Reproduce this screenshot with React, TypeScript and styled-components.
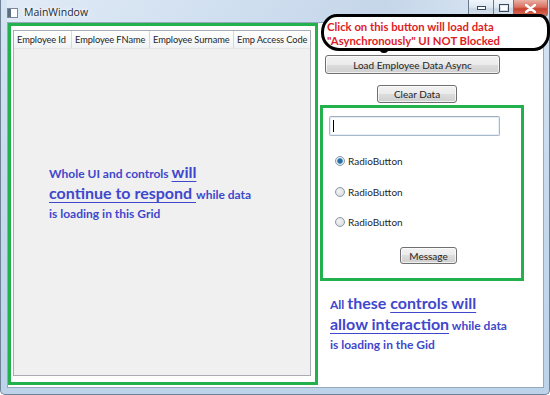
import React from "react";
import styled, { createGlobalStyle } from "styled-components";

const GlobalStyle = createGlobalStyle`
  html, body {
    margin: 0;
    padding: 0;
  }
  body {
    width: 550px;
    height: 395px;
    overflow: hidden;
    font-family: Lato, "Liberation Sans", sans-serif;
  }
`;

const Window = styled.div`
  position: relative;
  box-sizing: border-box;
  width: 550px;
  height: 395px;
  display: flex;
  flex-direction: column;
  padding: 0 5px 6px 6px;
  background: linear-gradient(to bottom, #d6e4f3 0%, #c7daee 45%, #bdd3ea 100%);
  border: 1px solid #6f8296;
  border-top: none;
  border-radius: 0 0 5px 5px;
`;

const TitleBar = styled.div`
  height: 22px;
  display: flex;
  align-items: flex-start;
  background: linear-gradient(
    to right,
    rgba(255, 255, 255, 0.25) 0%,
    rgba(180, 200, 225, 0.2) 45%,
    rgba(150, 175, 205, 0.25) 70%,
    rgba(255, 255, 255, 0.2) 100%
  );
`;

const AppIcon = styled.div`
  width: 9px;
  height: 8px;
  margin: 8px 0 0 0;
  border: 1px solid #7a8899;
  background: linear-gradient(to right, #5d6d80 0 3px, #ffffff 3px);
`;

const Title = styled.span`
  margin: 5px 0 0 6px;
  font-family: "Open Sans", sans-serif;
  font-size: 10.5px;
  color: #1e2935;
  text-shadow: 0 0 6px #ffffff, 0 0 3px #ffffff;
`;

const Controls = styled.div`
  margin-left: auto;
  margin-right: -4px;
  display: flex;
`;

const CaptionButton = styled.div<{ $close?: boolean; $w: number }>`
  width: ${(p) => p.$w}px;
  height: 17px;
  box-sizing: border-box;
  border: 1px solid #6a7a8e;
  border-top: none;
  margin-left: -1px;
  display: flex;
  align-items: center;
  justify-content: center;
  background: ${(p) =>
    p.$close
      ? "linear-gradient(to bottom, #eab0a4 0%, #d8705f 45%, #c7402f 55%, #d9735d 100%)"
      : "linear-gradient(to bottom, #f1f5fa 0%, #dfe8f2 45%, #c9d6e4 55%, #d9e4ef 100%)"};
  border-radius: ${(p) => (p.$close ? "0 0 4px 0" : "0")};
  &:first-child {
    border-radius: 0 0 0 4px;
  }
`;

const Client = styled.div`
  flex: 1;
  display: flex;
  align-items: flex-start;
  background: #ffffff;
  border: 1px solid #95a8bd;
`;

const GreenFrame = styled.div`
  box-sizing: border-box;
  width: 310px;
  height: 362px;
  border: 3px solid #22b14c;
  padding: 4px 4px 6px 2px;
  display: flex;
`;

const Grid = styled.div`
  flex: 1;
  display: flex;
  flex-direction: column;
  border: 1px solid #a9adb3;
  background: #f0f0f0;
`;

const HeaderRow = styled.div`
  display: flex;
  height: 17px;
  background: linear-gradient(to bottom, #ffffff 0%, #f7f8f9 60%, #f0f1f2 100%);
  border-bottom: 1px solid #e3e5e8;
`;

const HeaderCell = styled.div<{ $w?: number }>`
  ${(p) => (p.$w ? `width: ${p.$w}px;` : "flex: 1;")}
  box-sizing: border-box;
  padding-left: 3px;
  border-right: 1px solid #d5d9de;
  font-size: 9.3px;
  letter-spacing: -0.1px;
  line-height: 17px;
  color: #1f1f1f;
  white-space: nowrap;
  overflow: hidden;
  &:last-child {
    border-right: none;
  }
`;

const GridBody = styled.div`
  flex: 1;
  padding: 113px 0 0 35px;
`;

const Note = styled.div`
  font-family: Lato, sans-serif;
  font-weight: 700;
  font-size: 12px;
  line-height: 19px;
  color: #3f48cc;
`;

const Big = styled.span<{ $line?: boolean }>`
  font-size: 16px;
  font-weight: 700;
  text-decoration: ${(p) => (p.$line ? "underline" : "none")};
  text-decoration-thickness: 1px;
  text-underline-offset: 3px;
`;

const RightColumn = styled.div`
  display: flex;
  flex-direction: column;
  align-items: flex-start;
  margin: 32px 0 0 2px;
`;

const Button = styled.button<{ $w: number; $h: number; $ml: number; $mt: number }>`
  width: ${(p) => p.$w}px;
  height: ${(p) => p.$h}px;
  margin: ${(p) => p.$mt}px 0 0 ${(p) => p.$ml}px;
  padding: 0;
  border: 1px solid #707070;
  border-radius: 3px;
  background: linear-gradient(to bottom, #f2f2f2 0%, #ebebeb 50%, #dddddd 50%, #cfcfcf 100%);
  box-shadow: inset 0 0 0 1px rgba(255, 255, 255, 0.7);
  font-family: Lato, sans-serif;
  font-size: 10px;
  color: #1f1f1f;
  line-height: 1;
`;

const ControlsFrame = styled.div`
  box-sizing: border-box;
  width: 204px;
  height: 176px;
  margin-top: 2px;
  border: 3px solid #22b14c;
  padding: 8px 0 0 6px;
  display: flex;
  flex-direction: column;
  align-items: flex-start;
`;

const TextBox = styled.div`
  box-sizing: border-box;
  width: 171px;
  height: 20px;
  border: 1px solid #abb8c9;
  border-top-color: #9fadbe;
  border-radius: 2px;
  box-shadow: inset 0 0 0 1px #e6eef6;
  padding: 3px 0 0 3px;
`;

const Caret = styled.div`
  width: 1px;
  height: 12px;
  background: #000000;
`;

const RadioRow = styled.div<{ $mt: number }>`
  display: flex;
  align-items: center;
  height: 14px;
  margin: ${(p) => p.$mt}px 0 0 6px;
  font-size: 10px;
  color: #1f1f1f;
`;

const RadioDot = styled.span<{ $checked?: boolean }>`
  box-sizing: border-box;
  width: 10px;
  height: 10px;
  border-radius: 50%;
  border: 1px solid #8b99aa;
  margin-right: 3px;
  background: ${(p) =>
    p.$checked
      ? "radial-gradient(circle, #2d6c9c 0 2px, #5b9fd0 2.6px, #e8eef4 3.2px)"
      : "radial-gradient(circle at 40% 40%, #f4f4f4 0%, #d2d5d9 100%)"};
`;

const BottomNote = styled(Note)`
  margin: 12px 0 0 10px;
  line-height: 19px;
`;

const Callout = styled.div`
  position: absolute;
  left: 320px;
  top: 14px;
  width: 229px;
  height: 37px;
  box-sizing: border-box;
  border: 3px solid #000000;
  border-radius: 16px 10px 16px 18px / 18px 14px 18px 18px;
  padding: 3px 0 0 3px;
  font-family: Lato, sans-serif;
  font-weight: 700;
  font-size: 11.3px;
  line-height: 14px;
  color: #de1c26;
  background: #ffffff;
  &::after {
    content: "";
    position: absolute;
    left: 56px;
    bottom: -5px;
    width: 8px;
    height: 4px;
    border-bottom: 2px solid #000000;
    border-radius: 0 0 50% 50%;
  }
`;

const columns: { name: string; w?: number }[] = [
  { name: "Employee Id", w: 58 },
  { name: "Employee FName", w: 78 },
  { name: "Employee Surname", w: 84 },
  { name: "Emp Access Code" },
];

const App = () => {
  return (
    <>
      <GlobalStyle />
      <Window>
        <TitleBar>
          <AppIcon />
          <Title>MainWindow</Title>
          <Controls>
            <CaptionButton $w={26}>
              <svg width="9" height="4" viewBox="0 0 9 4">
                <rect x="0.5" y="0.5" width="8" height="3" fill="#ffffff" stroke="#3c4a5c" />
              </svg>
            </CaptionButton>
            <CaptionButton $w={21}>
              <svg width="10" height="8" viewBox="0 0 10 8">
                <rect x="0.5" y="0.5" width="9" height="7" fill="none" stroke="#3c4a5c" />
                <rect x="2.5" y="2.5" width="5" height="3" fill="#ffffff" stroke="#ffffff" />
              </svg>
            </CaptionButton>
            <CaptionButton $w={35} $close>
              <svg width="11" height="9" viewBox="0 0 11 9">
                <path d="M1 1 L10 8 M10 1 L1 8" stroke="#ffffff" strokeWidth="2.4" strokeLinecap="round" />
              </svg>
            </CaptionButton>
          </Controls>
        </TitleBar>
        <Client>
          <GreenFrame>
            <Grid>
              <HeaderRow>
                {columns.map((c) => (
                  <HeaderCell key={c.name} $w={c.w}>
                    {c.name}
                  </HeaderCell>
                ))}
              </HeaderRow>
              <GridBody>
                <Note>
                  Whole UI and controls <Big $line>will</Big>
                  <br />
                  <Big $line>continue to respond </Big>while data
                  <br />
                  is loading in this Grid
                </Note>
              </GridBody>
            </Grid>
          </GreenFrame>
          <RightColumn>
            <Button $w={175} $h={19} $ml={5} $mt={0}>
              Load Employee Data Async
            </Button>
            <Button $w={80} $h={18} $ml={57} $mt={11}>
              Clear Data
            </Button>
            <ControlsFrame>
              <TextBox>
                <Caret />
              </TextBox>
              <RadioRow $mt={18}>
                <RadioDot $checked />
                RadioButton
              </RadioRow>
              <RadioRow $mt={17}>
                <RadioDot />
                RadioButton
              </RadioRow>
              <RadioRow $mt={16}>
                <RadioDot />
                RadioButton
              </RadioRow>
              <Button $w={57} $h={17} $ml={71} $mt={18}>
                Message
              </Button>
            </ControlsFrame>
            <BottomNote>
              All <Big>these </Big>
              <Big $line>controls will</Big>
              <br />
              <Big $line>allow interaction</Big> while data
              <br />
              is loading in the Gid
            </BottomNote>
          </RightColumn>
        </Client>
        <Callout>
          Click on this button will load data
          <br />
          "Asynchronously" UI NOT Blocked
        </Callout>
      </Window>
    </>
  );
};

export default App;
